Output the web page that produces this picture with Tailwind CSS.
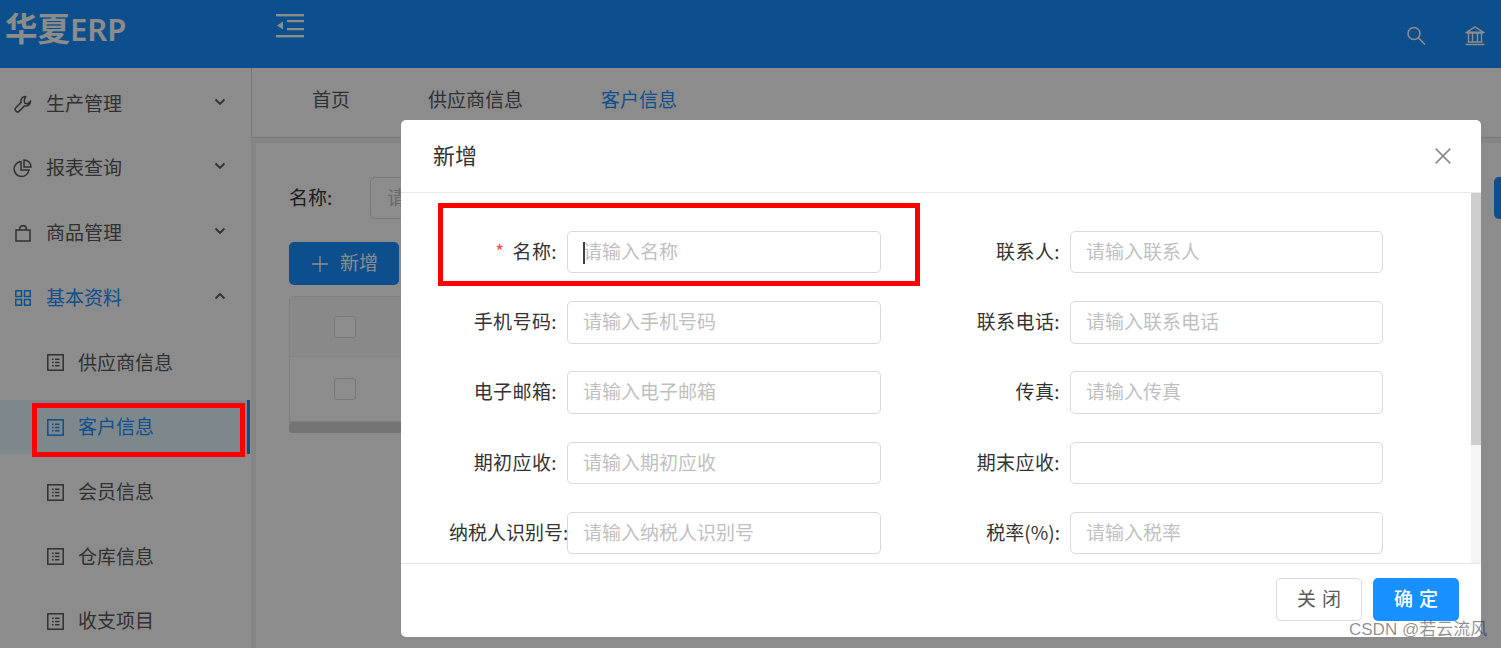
<!DOCTYPE html>
<html lang="zh-CN">
<head>
<meta charset="UTF-8">
<title>华夏ERP</title>
<script src="https://cdn.jsdelivr.net/npm/@tailwindcss/browser@4"></script>
</head>
<body class="font-['Noto_Sans_CJK_SC','Noto_Sans',sans-serif] text-[19px] text-[#595959]">
<div class="relative w-[1501px] h-[648px] overflow-hidden bg-[#f0f2f5]">

  <!-- top bar -->
  <header class="h-[68px] bg-[#1890ff] flex items-center text-white">
    <div class="w-[251px] pl-[5px] pb-[8px] font-['Liberation_Sans','Noto_Sans_CJK_SC',sans-serif] font-bold text-[32.5px] leading-none">华夏<span class="font-['Noto_Sans'] font-semibold text-[31px]">ERP</span></div>
    <svg class="ml-[25px] mb-[16px]" width="28" height="24" viewBox="0 0 28 24" fill="#fff"><rect x="0" y="0" width="28" height="2.4"/><rect x="11" y="6" width="17" height="2.2"/><rect x="11" y="14" width="17" height="2.2"/><rect x="0" y="21" width="28" height="2.4"/><path d="M7 7.5v8l-6-4z"/></svg>
    <div class="ml-auto flex items-center gap-[38px] pr-[16px] pt-[4px]">
      <svg width="20" height="20" viewBox="0 0 20 20" fill="none" stroke="#fff" stroke-width="1.6"><circle cx="7" cy="7.500" r="6"/><path d="M11.400 11.900l6.600 6.600"/></svg>
      <svg width="20" height="20" viewBox="0 0 20 20" fill="none" stroke="#fff" stroke-width="1.4"><path d="M10 .8L1.500 6.300h17zM1.500 7h17M3.500 7.500v8.500M7.500 7.500v8.500M12.500 7.500v8.500M16.500 7.500v8.500M2.500 16h15M.5 18.500h19"/></svg>
    </div>
  </header>

  <div class="flex h-[580px]">
    <!-- side menu -->
    <aside class="w-[251px] shrink-0 bg-white pt-[9px]">
      <div class="h-[54px] mb-[10.7px] flex items-center pl-[14px] pr-[25px]">
        <svg width="18" height="18" viewBox="0 0 18 18" fill="none" stroke="#595959" stroke-width="1.5"><path d="M11.600 1.600a4.300 4.300 0 0 0-4.400 5.800L1.600 13a1.900 1.900 0 0 0 0 2.600l.8.8a1.900 1.900 0 0 0 2.600 0l5.600-5.600a4.300 4.300 0 0 0 5.800-4.400l-2.800 2.500-2.800-.7-.7-2.800z"/></svg>
        <span class="ml-[14px] pb-[2px]">生产管理</span>
        <svg class="ml-auto mb-[5px]" width="12" height="8" viewBox="0 0 12 8" fill="none" stroke="#595959" stroke-width="1.8"><path d="M1.500 1.500L6 6l4.500-4.500"/></svg>
      </div>
      <div class="h-[54px] mb-[10.7px] flex items-center pl-[13px] pr-[25px]">
        <svg width="19" height="19" viewBox="0 0 19 19" fill="none" stroke="#595959" stroke-width="1.500"><path d="M8 2.500a7.500 7.500 0 1 0 8 8.500H8z"/><path d="M11 1a7 7 0 0 1 7 7h-7z"/></svg>
        <span class="ml-[14px] pb-[2px]">报表查询</span>
        <svg class="ml-auto mb-[5px]" width="12" height="8" viewBox="0 0 12 8" fill="none" stroke="#595959" stroke-width="1.8"><path d="M1.500 1.500L6 6l4.500-4.500"/></svg>
      </div>
      <div class="h-[54px] mb-[10.7px] flex items-center pl-[15px] pr-[25px]">
        <svg width="16" height="17" viewBox="0 0 16 17" fill="none" stroke="#595959" stroke-width="1.500"><path d="M1 5h14v11H1zM4.800 5V3a3.200 2.300 0 0 1 6.400 0v2"/></svg>
        <span class="ml-[15px] pb-[2px]">商品管理</span>
        <svg class="ml-auto mb-[5px]" width="12" height="8" viewBox="0 0 12 8" fill="none" stroke="#595959" stroke-width="1.8"><path d="M1.500 1.500L6 6l4.500-4.500"/></svg>
      </div>
      <div class="h-[54px] mb-[10.7px] flex items-center pl-[15px] pr-[25px] text-[#1890ff]">
        <svg width="16" height="16" viewBox="0 0 16 16" fill="none" stroke="#1890ff" stroke-width="1.500"><rect x=".8" y=".8" width="5.700" height="5.700"/><rect x="9.500" y=".8" width="5.700" height="5.700"/><rect x=".8" y="9.500" width="5.700" height="5.700"/><rect x="9.500" y="9.500" width="5.700" height="5.700"/></svg>
        <span class="ml-[15px] pb-[2px]">基本资料</span>
        <svg class="ml-auto mb-[5px]" width="12" height="8" viewBox="0 0 12 8" fill="none" stroke="#595959" stroke-width="1.8"><path d="M1.500 6.500L6 2l4.500 4.500"/></svg>
      </div>
      <div class="h-[54px] mb-[10.7px] flex items-center pl-[47px]">
        <svg width="17" height="17" viewBox="0 0 17 17" fill="none" stroke="#595959" stroke-width="1.500"><rect x=".8" y=".8" width="15.400" height="15.400"/><path d="M5 5.200h1.600M5 8.500h1.600M5 11.800h1.600M8 5.200h4.500M8 8.500h4.500M8 11.800h4.500"/></svg>
        <span class="ml-[14px] pb-[2px]">供应商信息</span>
      </div>
      <div class="h-[54px] mb-[10.7px] flex items-center pl-[47px] bg-[#e6f7ff] border-r-[3px] border-[#1890ff] mr-px text-[#1890ff]">
        <svg width="17" height="17" viewBox="0 0 17 17" fill="none" stroke="#1890ff" stroke-width="1.500"><rect x=".8" y=".8" width="15.400" height="15.400"/><path d="M5 5.200h1.600M5 8.500h1.600M5 11.800h1.600M8 5.200h4.500M8 8.500h4.500M8 11.800h4.500"/></svg>
        <span class="ml-[14px] pb-[2px]">客户信息</span>
      </div>
      <div class="h-[54px] mb-[10.7px] flex items-center pl-[47px]">
        <svg width="17" height="17" viewBox="0 0 17 17" fill="none" stroke="#595959" stroke-width="1.500"><rect x=".8" y=".8" width="15.400" height="15.400"/><path d="M5 5.200h1.600M5 8.500h1.600M5 11.800h1.600M8 5.200h4.500M8 8.500h4.500M8 11.800h4.500"/></svg>
        <span class="ml-[14px] pb-[2px]">会员信息</span>
      </div>
      <div class="h-[54px] mb-[10.7px] flex items-center pl-[47px]">
        <svg width="17" height="17" viewBox="0 0 17 17" fill="none" stroke="#595959" stroke-width="1.500"><rect x=".8" y=".8" width="15.400" height="15.400"/><path d="M5 5.200h1.600M5 8.500h1.600M5 11.800h1.600M8 5.200h4.500M8 8.500h4.500M8 11.800h4.500"/></svg>
        <span class="ml-[14px] pb-[2px]">仓库信息</span>
      </div>
      <div class="h-[54px] flex items-center pl-[47px]">
        <svg width="17" height="17" viewBox="0 0 17 17" fill="none" stroke="#595959" stroke-width="1.500"><rect x=".8" y=".8" width="15.400" height="15.400"/><path d="M5 5.200h1.600M5 8.500h1.600M5 11.800h1.600M8 5.200h4.500M8 8.500h4.500M8 11.800h4.500"/></svg>
        <span class="ml-[14px] pb-[2px]">收支项目</span>
      </div>
    </aside>

    <!-- page behind the dialog -->
    <main class="flex-1 min-w-0">
      <nav class="h-[70px] bg-white border-b border-l border-[#d9d9d9] flex items-center pb-[6px] pl-[60px] gap-[78px]">
        <span>首页</span>
        <span>供应商信息</span>
        <span class="text-[#1890ff]">客户信息</span>
      </nav>
      <section class="bg-white ml-[5px] mt-[5px] h-[505px] pl-[33px] pt-[34px]">
        <div class="flex items-center h-[42px] text-[#333]">
          <span class="w-[81px] pb-[2px]">名称:</span>
          <div class="w-[200px] h-[42px] border border-[#d9d9d9] rounded-[5px] pl-[16px] pb-[2px] flex items-center text-[#bfbfbf]">请</div>
          <div class="ml-auto w-[7px] h-[42px] bg-[#1890ff] rounded-l-[5px]"></div>
        </div>
        <div class="mt-[23px] w-[110px] h-[43px] bg-[#1890ff] text-white rounded-[5px] flex items-center pl-[23px] gap-[12px]">
          <svg width="16" height="16" viewBox="0 0 16 16" stroke="#fff" stroke-width="1.300"><path d="M8 0v16M0 8h16"/></svg>
          <span class="pb-[3px]">新增</span>
        </div>
        <div class="mt-[11px] border border-[#e8e8e8] rounded-t-[5px] h-[126px] mr-[20px]">
          <div class="h-[60px] bg-[#fafafa] border-b border-[#f0f0f0] pl-[44px] flex items-center"><div class="w-[22px] h-[22px] border border-[#d9d9d9] bg-white rounded-[3px]"></div></div>
          <div class="h-[64px] pl-[44px] flex items-center"><div class="w-[22px] h-[22px] border border-[#d9d9d9] bg-white rounded-[3px]"></div></div>
        </div>
        <div class="h-[11px] bg-[#d4d4d4] rounded-[3px] mr-[20px]"></div>
      </section>
    </main>
  </div>

  <!-- modal mask -->
  <div class="absolute inset-0 bg-black/45"></div>

  <!-- dialog -->
  <div class="absolute left-[401px] top-[120px] w-[1080px] h-[517px] bg-white rounded-[5px] flex flex-col">
    <div class="h-[73px] shrink-0 border-b border-[#e8e8e8] flex items-center justify-between pl-[32px] pr-[30px]">
      <span class="text-[22px] text-[#333] pb-[4px]">新增</span>
      <svg width="16" height="16" viewBox="0 0 16 16" stroke="#8c8c8c" stroke-width="1.700"><path d="M.7.7l14.600 14.600M15.300.7L.7 15.300"/></svg>
    </div>
    <div class="flex-1 min-h-0 flex">
      <div class="flex-1 pt-[38px] overflow-hidden">
        <div class="grid grid-cols-[166px_314px_189px_313px] auto-rows-[42.4px] gap-y-[27.8px] items-center">
          <label class="flex justify-end items-center pr-[10px] pb-[2px] tracking-[.4px] text-[#333]"><span class="text-[#ff4d4f] mr-[8px]">*</span>名称:</label>
          <div class="relative h-full border border-[#d9d9d9] rounded-[5px] pl-[15px] pb-[2px] flex items-center text-[#bfbfbf]"><span class="absolute left-[15px] top-[10px] w-[2px] h-[22px] bg-[#404040]"></span>请输入名称</div>
          <label class="flex justify-end pr-[10px] pb-[2px] tracking-[.4px] text-[#333]">联系人:</label>
          <div class="h-full border border-[#d9d9d9] rounded-[5px] pl-[15px] pb-[2px] flex items-center text-[#bfbfbf]">请输入联系人</div>

          <label class="flex justify-end pr-[10px] pb-[2px] tracking-[.4px] text-[#333]">手机号码:</label>
          <div class="h-full border border-[#d9d9d9] rounded-[5px] pl-[15px] pb-[2px] flex items-center text-[#bfbfbf]">请输入手机号码</div>
          <label class="flex justify-end pr-[10px] pb-[2px] tracking-[.4px] text-[#333]">联系电话:</label>
          <div class="h-full border border-[#d9d9d9] rounded-[5px] pl-[15px] pb-[2px] flex items-center text-[#bfbfbf]">请输入联系电话</div>

          <label class="flex justify-end pr-[10px] pb-[2px] tracking-[.4px] text-[#333]">电子邮箱:</label>
          <div class="h-full border border-[#d9d9d9] rounded-[5px] pl-[15px] pb-[2px] flex items-center text-[#bfbfbf]">请输入电子邮箱</div>
          <label class="flex justify-end pr-[10px] pb-[2px] tracking-[.4px] text-[#333]">传真:</label>
          <div class="h-full border border-[#d9d9d9] rounded-[5px] pl-[15px] pb-[2px] flex items-center text-[#bfbfbf]">请输入传真</div>

          <label class="flex justify-end pr-[10px] pb-[2px] tracking-[.4px] text-[#333]">期初应收:</label>
          <div class="h-full border border-[#d9d9d9] rounded-[5px] pl-[15px] pb-[2px] flex items-center text-[#bfbfbf]">请输入期初应收</div>
          <label class="flex justify-end pr-[10px] pb-[2px] tracking-[.4px] text-[#333]">期末应收:</label>
          <div class="h-full border border-[#d9d9d9] rounded-[5px]"></div>

          <label class="pl-[48px] pb-[2px] whitespace-nowrap text-[#333]">纳税人识别号:</label>
          <div class="relative h-full bg-white border border-[#d9d9d9] rounded-[5px] pl-[15px] pb-[2px] flex items-center text-[#bfbfbf]">请输入纳税人识别号</div>
          <label class="flex justify-end pr-[10px] pb-[2px] text-[#333]">税率(%):</label>
          <div class="h-full border border-[#d9d9d9] rounded-[5px] pl-[15px] pb-[2px] flex items-center text-[#bfbfbf]">请输入税率</div>
        </div>
      </div>
      <div class="w-[10px] bg-[#f5f5f5] shrink-0"><div class="h-[252px] bg-[#cdcdcd]"></div></div>
    </div>
    <div class="h-[74px] shrink-0 border-t border-[#e8e8e8] flex items-start justify-end gap-[11px] pt-[14px] pr-[22px]">
      <div class="w-[86px] h-[43px] border border-[#d9d9d9] rounded-[5px] flex items-center justify-center pb-[3px] pl-[6px] tracking-[6px] text-[#595959]">关闭</div>
      <div class="w-[86px] h-[43px] bg-[#1890ff] rounded-[5px] flex items-center justify-center pb-[3px] pl-[6px] tracking-[6px] font-medium text-white">确定</div>
    </div>
  </div>

  <!-- red annotations -->
  <div class="absolute left-[32px] top-[403px] w-[213px] h-[54px] border-[5px] border-[#ff0000]"></div>
  <div class="absolute left-[438px] top-[203px] w-[482px] h-[83px] border-[5px] border-[#ff0000]"></div>

  <!-- watermark -->
  <div class="absolute left-[1349px] top-[618px] font-['Liberation_Sans','Noto_Sans_CJK_SC',sans-serif] text-[17px] leading-[24px] whitespace-nowrap text-black/45">CSDN @若云流风</div>
</div>
</body>
</html>
